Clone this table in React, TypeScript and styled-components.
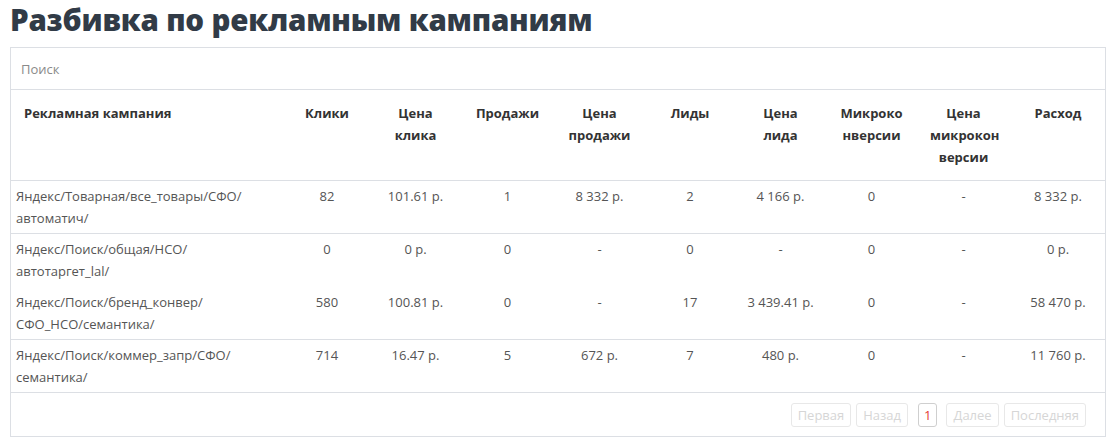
import styled, { createGlobalStyle } from "styled-components";

const GlobalStyle = createGlobalStyle`
  body {
    margin: 0;
    background: #ffffff;
    font-family: "Open Sans", "Liberation Sans", sans-serif;
  }
`;

type Row = {
  campaign: string[];
  clicks: string;
  clickPrice: string;
  sales: string;
  salePrice: string;
  leads: string;
  leadPrice: string;
  micro: string;
  microPrice: string;
  spend: string;
  noBorder?: boolean;
};

const columns: { title: string[]; width: number; align: "left" | "center" }[] = [
  { title: ["Рекламная кампания"], width: 273, align: "left" },
  { title: ["Клики"], width: 86, align: "center" },
  { title: ["Цена", "клика"], width: 91, align: "center" },
  { title: ["Продажи"], width: 93, align: "center" },
  { title: ["Цена", "продажи"], width: 91, align: "center" },
  { title: ["Лиды"], width: 90, align: "center" },
  { title: ["Цена", "лида"], width: 91, align: "center" },
  { title: ["Микроко", "нверсии"], width: 91, align: "center" },
  { title: ["Цена", "микрокон", "версии"], width: 93, align: "center" },
  { title: ["Расход"], width: 96, align: "center" },
];

const rows: Row[] = [
  {
    campaign: ["Яндекс/Товарная/все_товары/СФО/", "автоматич/"],
    clicks: "82",
    clickPrice: "101.61 р.",
    sales: "1",
    salePrice: "8 332 р.",
    leads: "2",
    leadPrice: "4 166 р.",
    micro: "0",
    microPrice: "-",
    spend: "8 332 р.",
  },
  {
    campaign: ["Яндекс/Поиск/общая/НСО/", "автотаргет_lal/"],
    clicks: "0",
    clickPrice: "0 р.",
    sales: "0",
    salePrice: "-",
    leads: "0",
    leadPrice: "-",
    micro: "0",
    microPrice: "-",
    spend: "0 р.",
  },
  {
    campaign: ["Яндекс/Поиск/бренд_конвер/", "СФО_НСО/семантика/"],
    clicks: "580",
    clickPrice: "100.81 р.",
    sales: "0",
    salePrice: "-",
    leads: "17",
    leadPrice: "3 439.41 р.",
    micro: "0",
    microPrice: "-",
    spend: "58 470 р.",
    noBorder: true,
  },
  {
    campaign: ["Яндекс/Поиск/коммер_запр/СФО/", "семантика/"],
    clicks: "714",
    clickPrice: "16.47 р.",
    sales: "5",
    salePrice: "672 р.",
    leads: "7",
    leadPrice: "480 р.",
    micro: "0",
    microPrice: "-",
    spend: "11 760 р.",
  },
];

const Page = styled.main`
  padding: 0 8px 0 10px;
`;

const Title = styled.h1`
  margin: 0;
  padding-top: 1px;
  height: 47px;
  font-family: "Open Sans", "Liberation Sans", sans-serif;
  font-weight: 800;
  font-size: 29.5px;
  line-height: 38px;
  letter-spacing: -0.2px;
  color: #313b47;
  box-sizing: border-box;
`;

const Panel = styled.section`
  border: 1px solid #dcdfe4;
  background: #fff;
`;

const SearchBar = styled.div`
  height: 41px;
  display: flex;
  align-items: center;
  padding: 0 10px;
  border-bottom: 1px solid #dcdfe4;
`;

const SearchInput = styled.input`
  border: none;
  outline: none;
  padding: 0;
  width: 100%;
  font-family: inherit;
  font-size: 13px;
  color: #555;
  background: transparent;

  &::placeholder {
    color: #8a8a8a;
  }
`;

const Table = styled.table`
  width: 100%;
  border-collapse: collapse;
  table-layout: fixed;
  font-size: 13px;
`;

const Col = styled.col<{ $width: number }>`
  width: ${({ $width }) => $width}px;
`;

const HeadCell = styled.th<{ $align: "left" | "center" }>`
  padding: 12px 13px 12px;
  height: 89px;
  box-sizing: border-box;
  vertical-align: top;
  text-align: ${({ $align }) => $align};
  font-weight: 700;
  font-size: 13px;
  line-height: 22px;
  color: #333;
`;

const BodyRow = styled.tr<{ $noBorder?: boolean }>`
  border-top: 1px solid ${({ $noBorder }) => ($noBorder ? "transparent" : "#dcdfe4")};
`;

const Cell = styled.td<{ $align: "left" | "center" }>`
  padding: 4px 5px 4px;
  vertical-align: top;
  text-align: ${({ $align }) => $align};
  line-height: 22px;
  color: #555;
  white-space: nowrap;
`;

const Footer = styled.div`
  border-top: 1px solid #dcdfe4;
  height: 43px;
  display: flex;
  align-items: center;
  justify-content: flex-end;
  gap: 5px;
  padding-right: 19px;
`;

const PageButton = styled.button<{ $active?: boolean }>`
  height: 24px;
  padding: 0 ${({ $active }) => ($active ? "5px" : "6px")};
  margin: ${({ $active }) => ($active ? "0 4px 0 5px" : "0")};
  border: 1px solid ${({ $active }) => ($active ? "#cfcfcf" : "#e8e8e8")};
  border-radius: 3px;
  background: #fff;
  font-family: inherit;
  font-size: 13px;
  color: ${({ $active }) => ($active ? "#e53935" : "#d6d6d6")};
  cursor: ${({ $active }) => ($active ? "default" : "not-allowed")};
`;

export default function App() {
  const pick = (row: Row) => [
    row.clicks,
    row.clickPrice,
    row.sales,
    row.salePrice,
    row.leads,
    row.leadPrice,
    row.micro,
    row.microPrice,
    row.spend,
  ];

  return (
    <Page>
      <GlobalStyle />
      <Title>Разбивка по рекламным кампаниям</Title>
      <Panel>
        <SearchBar>
          <SearchInput placeholder="Поиск" />
        </SearchBar>
        <Table>
          <colgroup>
            {columns.map((column, i) => (
              <Col key={i} $width={column.width} />
            ))}
          </colgroup>
          <thead>
            <tr>
              {columns.map((column, i) => (
                <HeadCell key={i} $align={column.align}>
                  {column.title.map((line, j) => (
                    <span key={j}>
                      {j > 0 ? <br /> : null}
                      {line}
                    </span>
                  ))}
                </HeadCell>
              ))}
            </tr>
          </thead>
          <tbody>
            {rows.map((row, i) => (
              <BodyRow key={i} $noBorder={row.noBorder}>
                <Cell $align="left">
                  {row.campaign[0]}
                  <br />
                  {row.campaign[1]}
                </Cell>
                {pick(row).map((value, j) => (
                  <Cell key={j} $align="center">
                    {value}
                  </Cell>
                ))}
              </BodyRow>
            ))}
          </tbody>
        </Table>
        <Footer>
          <PageButton disabled>Первая</PageButton>
          <PageButton disabled>Назад</PageButton>
          <PageButton $active>1</PageButton>
          <PageButton disabled>Далее</PageButton>
          <PageButton disabled>Последняя</PageButton>
        </Footer>
      </Panel>
    </Page>
  );
}
